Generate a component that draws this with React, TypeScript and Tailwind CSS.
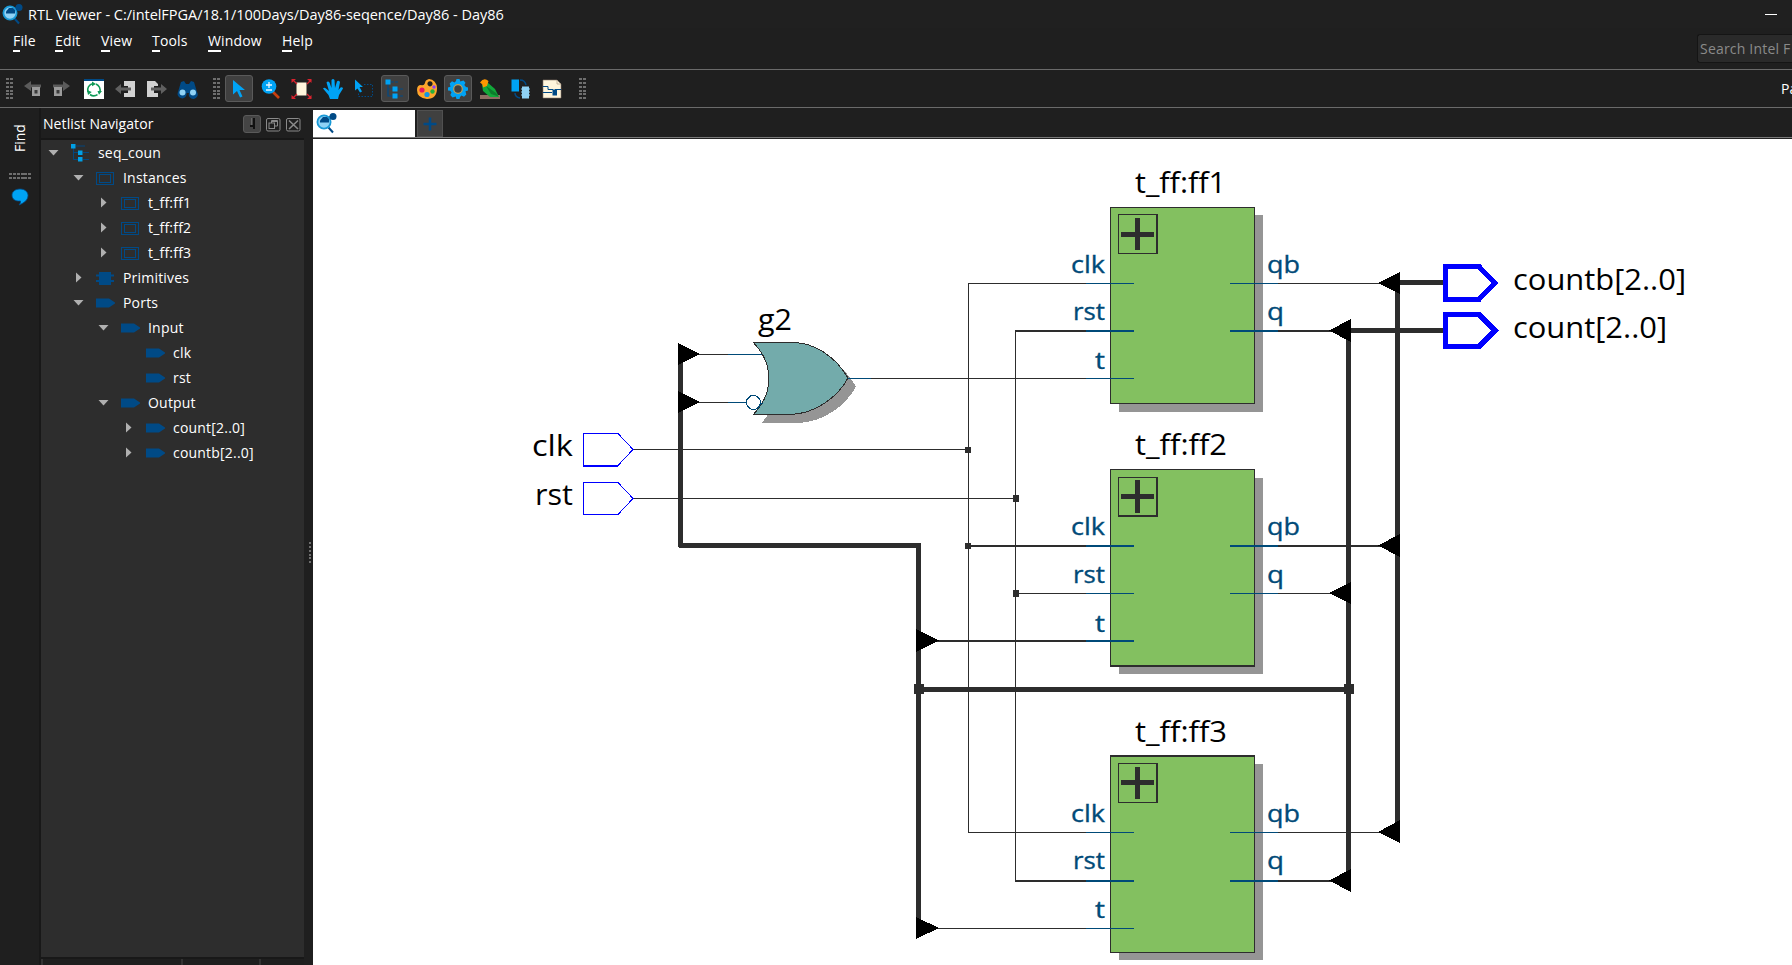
import React from "react";

const BLUE = "#004a86";
const CYAN = "#00a3f5";
const WIRE = "#2d2d2d";
const PIN = "#004a78";

function ViewerIcon() {
  return (
    <svg width="21" height="21" viewBox="0 0 21 21" className="block shrink-0">
      <path d="M12.5 14.5 L17 19.5" stroke={BLUE} strokeWidth="2" />
      <path d="M10 5 L16 3" stroke={BLUE} strokeWidth="1" />
      <circle cx="8" cy="9" r="6.600" fill="#8fd2f5" stroke="#1899d6" strokeWidth="1.800" />
      <path d="M4 9.500V7.500L7 4h4l2 2v3.500Z" fill={BLUE} />
      <circle cx="17" cy="3.500" r="3.500" fill={BLUE} />
    </svg>
  );
}

function Grip() {
  return (
    <svg width="7" height="22" viewBox="0 0 7 22" className="block shrink-0" shapeRendering="crispEdges">
      {[0, 4, 8, 12, 15, 19].map((y) => (
        <g key={y} fill="#6e6e6e">
          <rect x="0" y={y} width="3" height="2" />
          <rect x="4" y={y} width="3" height="2" />
        </g>
      ))}
    </svg>
  );
}

function Icon({ children }: { children: React.ReactNode }) {
  return (
    <svg width="22" height="22" viewBox="0 0 22 22" className="block shrink-0">
      {children}
    </svg>
  );
}

function Tool({ wide = false, active = false, children }: { wide?: boolean; active?: boolean; children: React.ReactNode }) {
  return (
    <div className={`flex h-full shrink-0 items-center justify-center ${wide ? "w-8" : "w-[31px]"}`}>
      <div
        className={`flex h-[27px] w-7 items-center justify-center rounded-[3px] border ${
          active ? "border-[#5a5a5a] bg-[#404040]" : "border-transparent"
        }`}
      >
        <Icon>{children}</Icon>
      </div>
    </div>
  );
}

const HierarchyShapes = () => (
  <>
    <path d="M4 5 V18 H9 M4 11 H9" stroke={BLUE} strokeWidth="1.200" fill="none" />
    <path d="M7 4 H15 M12 11 H19 M12 18 H19" stroke={BLUE} strokeWidth="1.200" strokeDasharray="3 1" fill="none" />
    <rect x="1.500" y="1.500" width="5" height="5" fill={CYAN} />
    <rect x="8.500" y="8.500" width="5" height="5" fill={CYAN} />
    <rect x="8.500" y="15.500" width="5" height="5" fill={CYAN} />
  </>
);

function Toolbar() {
  return (
    <div className="flex h-[39px] items-center border-y border-[#6a6a6a] bg-[#1f1f1f]">
      <div className="flex w-[19px] shrink-0 pl-1.5">
        <Grip />
      </div>
      <div className="flex h-full w-7 shrink-0 items-center justify-center">
        <Icon>
          <path d="M2 8 L9 3 V6.500 H19 V9.500 H9 V13Z" fill="#5b5b5b" />
          <rect x="10" y="9" width="8" height="9" fill="#9b9b9b" />
          <rect x="12.500" y="12" width="3" height="3.500" fill="#3a3a3a" />
        </Icon>
      </div>
      <div className="flex h-full w-7 shrink-0 items-center justify-center">
        <Icon>
          <path d="M20 8 L13 3 V6.500 H3 V9.500 H13 V13Z" fill="#5b5b5b" />
          <rect x="4" y="9" width="8" height="9" fill="#9b9b9b" />
          <rect x="6.500" y="12" width="3" height="3.500" fill="#3a3a3a" />
        </Icon>
      </div>
      <div className="w-[3px] shrink-0" />
      <Tool wide>
        <rect x="1" y="1" width="20" height="20" fill="#fff" />
        <rect x="1" y="1" width="20" height="2" fill={BLUE} />
        <path d="M5 14 A6.500 6.500 0 0 1 10 5.500 M13 6 A6.500 6.500 0 0 1 16.800 14 M14.500 16.700 A6.500 6.500 0 0 1 7 16.500" fill="none" stroke="#0f9a57" strokeWidth="1.600" />
        <path d="M9 3.500 l4 2.500 -4 2.300Z M14.500 13 h4.500 l-3 3.800Z M4 12 l1 5 3.800 -3Z" fill="#0f9a57" />
      </Tool>
      <Tool>
        <path d="M9 3 H20 V19 H9 V15 H13 V8 H9Z" fill="#d2d2d2" />
        <path d="M0 11 L6 6 V9.500 H16 V12.500 H6 V16Z" fill="#606060" />
      </Tool>
      <Tool>
        <path d="M1 3 H9 L12 6 V8 H8 V15 H12 V19 H1Z" fill="#d2d2d2" />
        <path d="M21 11 L15 6 V9.500 H5 V12.500 H15 V16Z" fill="#606060" />
      </Tool>
      <Tool wide>
        <path d="M4 4 L7 3 L9 6 H12 L14 3 L17 4 L20 14 A4.500 4.500 0 1 1 12 15 H9.500 A4.500 4.500 0 1 1 1 14Z" fill={BLUE} />
        <circle cx="5.500" cy="14.500" r="3" fill="#8fd2f5" />
        <circle cx="16" cy="14.500" r="3" fill="#8fd2f5" />
      </Tool>
      <div className="flex w-[19px] shrink-0 pl-[9px]">
        <Grip />
      </div>
      <Tool wide active>
        <path d="M5 2 L17 12 H11.500 L14.500 18.500 L12 19.500 L9 13 L5 16.500Z" fill={CYAN} />
      </Tool>
      <Tool>
        <path d="M13 14 L19 20" stroke="#c6400f" strokeWidth="2.600" />
        <circle cx="9" cy="8.500" r="7.300" fill={CYAN} />
        <path d="M9 4 V10 M6 7 H12 M6 12 H12" stroke="#e8f6ff" strokeWidth="1.300" />
      </Tool>
      <Tool>
        <rect x="5.500" y="4.500" width="10" height="13" fill="#fff5dc" />
        <path d="M2 2 L6 6 M20 2 L16 6 M2 20 L6 16 M20 20 L16 16" stroke="#d9232e" strokeWidth="1.200" />
        <path d="M0.500 1 H5 L0.500 5Z M20.500 1 H16 L20.500 5Z M0.500 21 H5 L0.500 17Z M20.500 21 H16 L20.500 17Z" fill="#d9232e" />
      </Tool>
      <Tool>
        <path d="M8 21 L6.500 17 L1 10.500 Q2 9 4 10.500 L7 13 L4.500 4.500 Q6 2.500 7.500 4.500 L9.500 10 L9.500 2 Q11 0 12.500 2 L13 10 L15 3.500 Q16.500 2 18 4 L16.500 12 L18.500 9.500 Q20.500 8.500 21 10.500 L17 17 L16 21Z" fill={CYAN} />
      </Tool>
      <Tool>
        <path d="M2 1.500 L10 9 H6.500 L9 13.500 L7 14.500 L4.500 10.500 L2 12.500Z" fill={CYAN} />
        <path d="M11 6.500 H19.500 V18.500 H5.500 V14" fill="none" stroke={BLUE} strokeWidth="1" strokeDasharray="1.500 1.500" />
      </Tool>
      <Tool wide active>
        <HierarchyShapes />
      </Tool>
      <Tool>
        <path fillRule="evenodd" d="M13 1 A8 9 0 0 1 21 10 Q21 21 11 21 Q1 20 1 12 Q1 7 5 7 Q8 8 9 5 Q9 2 13 1Z M14 3.200 a2.600 2.600 0 1 0 0.010 0Z" fill="#ffa62b" />
        <circle cx="6" cy="12" r="2.600" fill="#e8175d" />
        <circle cx="11" cy="16.500" r="2.600" fill="#1296e8" />
        <circle cx="16.500" cy="13.500" r="2.200" fill="#28b23c" />
        <circle cx="18" cy="9" r="1.700" fill="#8a3ffc" />
      </Tool>
      <Tool wide active>
        <path d="M9.500 1 H12.500 L13.300 3.500 L16.500 2.500 L18.500 4.800 L17.300 7 L19 9 L21 9.500 V12.500 L18.500 13.300 L19.300 16.500 L17 18.700 L14.500 17.500 L13 19 L12.500 21 H9.500 L8.700 18.500 L5.500 19.500 L3.300 17 L4.500 14.500 L3.300 12.800 L1 12.500 V9.500 L3.500 8.700 L2.700 5.500 L5 3.300 L7.500 4.500 L9 3Z" fill={CYAN} />
        <circle cx="11" cy="11" r="4.300" fill="#404040" stroke="#b9a05a" strokeWidth="1.200" />
      </Tool>
      <Tool>
        <rect x="1" y="17" width="20" height="4" fill="#8c6e63" />
        <path d="M3 7 L8 4 L16 11 L20 19 H11 L4 13Z" fill="#12a83a" />
        <path d="M7 8 L17 15 L19.500 18.500 L12 16Z" fill="#0c7d2c" />
        <path d="M1 4.500 Q5 -1 9.500 3 L8 8 L4 9.500 Q4 6 1 4.500Z" fill="#ff9800" />
      </Tool>
      <Tool>
        <rect x="1.500" y="1.500" width="7.500" height="12" fill={CYAN} />
        <rect x="12" y="8.500" width="7" height="12" fill="#8fd2f5" />
        <path d="M10 2 Q15 2 16 7 M5 15 Q5 19 10 20" fill="none" stroke={BLUE} strokeWidth="1.500" />
        <path d="M11 11 h2 M11 14 h2 M11 17 h2 M18 11 h2 M18 14 h2 M18 17 h2" stroke="#8fd2f5" strokeWidth="1" />
      </Tool>
      <Tool>
        <path d="M2 2 H16 L20 6 V20 H2Z" fill="#fff5dc" stroke="#8c7a6b" strokeWidth="0.600" />
        <path d="M16 2 V6 H20" fill="none" stroke="#b8a58d" strokeWidth="0.800" />
        <path d="M2 8.500 H7 V11.500 H12 M14 11.500 H20 M2 14.500 H11" stroke={BLUE} strokeWidth="1" fill="none" />
        <rect x="11.500" y="11.500" width="4.500" height="6" fill={BLUE} />
      </Tool>
      <div className="flex shrink-0 pl-3">
        <Grip />
      </div>
      <div className="ml-auto w-[11px] shrink-0 overflow-hidden text-[14px] whitespace-nowrap text-white">Pa</div>
    </div>
  );
}

function MenuItem({ label, className }: { label: string; className: string }) {
  return (
    <div className={`shrink-0 whitespace-nowrap ${className}`}>
      <span className="border-b-2 border-white pb-0">{label[0]}</span>
      {label.slice(1)}
    </div>
  );
}

type IconKind = "tree" | "inst" | "prim" | "port";

function NodeIcon({ kind }: { kind: IconKind }) {
  return (
    <svg width="20" height="20" viewBox="0 0 20 20" className="block shrink-0">
      {kind === "tree" && (
        <>
          <path d="M2.500 4 V16.500 H7 M2.500 9.500 H7 M5 3 H14 M12 9.500 H18 M12 16.500 H18" stroke={BLUE} strokeWidth="0.900" fill="none" />
          <rect x="0" y="1" width="4.500" height="4.500" fill="#00a0e6" />
          <rect x="7" y="7.500" width="4.500" height="4.500" fill="#00a0e6" />
          <rect x="7" y="14" width="4.500" height="4.500" fill="#00a0e6" />
        </>
      )}
      {kind === "inst" && (
        <g fill="none" stroke={BLUE} shapeRendering="crispEdges">
          <rect x="0.500" y="4.500" width="17" height="12" />
          <rect x="3.500" y="6.500" width="11" height="8" />
        </g>
      )}
      {kind === "prim" && (
        <path d="M3 4 H15 V6.500 H18 V8.500 H15 V12 H18 V14 H15 V17 H3 V14 H0 V12 H3 V8.500 H0 V6.500 H3Z" fill={BLUE} />
      )}
      {kind === "port" && <path d="M0 5.500 H13 L19 9.500 V10.500 L13 14.500 H0Z" fill={BLUE} />}
    </svg>
  );
}

const indent = ["pl-[7px]", "pl-8", "pl-[57px]", "pl-[82px]"];

const nodes: { d: number; open?: boolean; leaf?: boolean; icon: IconKind; text: string }[] = [
  { d: 0, open: true, icon: "tree", text: "seq_coun" },
  { d: 1, open: true, icon: "inst", text: "Instances" },
  { d: 2, icon: "inst", text: "t_ff:ff1" },
  { d: 2, icon: "inst", text: "t_ff:ff2" },
  { d: 2, icon: "inst", text: "t_ff:ff3" },
  { d: 1, icon: "prim", text: "Primitives" },
  { d: 1, open: true, icon: "port", text: "Ports" },
  { d: 2, open: true, icon: "port", text: "Input" },
  { d: 3, leaf: true, icon: "port", text: "clk" },
  { d: 3, leaf: true, icon: "port", text: "rst" },
  { d: 2, open: true, icon: "port", text: "Output" },
  { d: 3, icon: "port", text: "count[2..0]" },
  { d: 3, icon: "port", text: "countb[2..0]" },
];

function Navigator() {
  return (
    <div className="flex w-[263px] shrink-0 flex-col">
      <div className="flex h-8 shrink-0 items-center border-b-2 border-[#171717] pt-0.5 pl-0.5">
        <span className="-mt-px text-[14px] tracking-[0.08px] text-white">Netlist Navigator</span>
        <div className="ml-auto flex items-center gap-[5px] pr-[3px]">
          <div className="flex h-[18px] w-[18px] items-center justify-center rounded-[3px] border border-[#5a5a5a] bg-[#444]">
            <svg width="8" height="14" viewBox="0 0 8 14">
              <path d="M6 1 V12 M2 9 H6" stroke="#111" strokeWidth="2" />
              <path d="M3.500 1 V8" stroke="#666" strokeWidth="1" />
            </svg>
          </div>
          <svg width="15" height="15" viewBox="0 0 15 15" fill="none" stroke="#8a8a8a">
            <rect x="0.500" y="1.500" width="13.500" height="12.500" rx="1.500" />
            <rect x="3" y="6" width="5.500" height="5.500" />
            <path d="M5.500 6 V3.500 H11.500 V9 H8.500 M5.500 4.500 H11.500" />
          </svg>
          <svg width="15" height="15" viewBox="0 0 15 15" fill="none" stroke="#8a8a8a">
            <rect x="0.500" y="1.500" width="13.500" height="12.500" rx="1.500" />
            <path d="M3 3.500 L12 12 M12 3.500 L3 12" strokeWidth="1.600" />
          </svg>
        </div>
      </div>
      <div className="h-[817px] shrink-0 bg-[#2d2d2d]">
        {nodes.map((n) => (
          <div key={n.text} className={`flex h-[25px] items-center ${indent[n.d]}`}>
            <svg width="11" height="11" viewBox="0 0 11 11" className="mr-3 block shrink-0">
              {!n.leaf &&
                (n.open ? (
                  <path d="M0.500 3 H10.500 L5.500 8.500Z" fill="#b0b0b0" />
                ) : (
                  <path d="M3 0.500 V10.500 L8.500 5.500Z" fill="#b0b0b0" />
                ))}
            </svg>
            <NodeIcon kind={n.icon} />
            <span className="ml-[7px] text-[14px] tracking-[0.2px] text-white">{n.text}</span>
          </div>
        ))}
      </div>
      <div className="flex min-h-0 flex-1 border-t-2 border-[#181818] bg-[#1e1e1e]">
        <div className="w-[142px] border-x-2 border-[#333]" />
        <div className="w-[78px] border-r-2 border-[#333]" />
      </div>
    </div>
  );
}

function Txt({ x, y, w, size, color = "#000", children }: { x: number; y: number; w: number; size: number; color?: string; children: string }) {
  return (
    <text x={x} y={y} fontSize={size} fill={color} textLength={w} lengthAdjust="spacingAndGlyphs">
      {children}
    </text>
  );
}

function H({ y, x1, x2, h = 1, c = WIRE }: { y: number; x1: number; x2: number; h?: number; c?: string }) {
  return <rect x={x1} y={y} width={x2 - x1} height={h} fill={c} />;
}
function V({ x, y1, y2, w = 1 }: { x: number; y1: number; y2: number; w?: number }) {
  return <rect x={x} y={y1} width={w} height={y2 - y1} fill={WIRE} />;
}

const GATE = "M753.500 342.500 H794 C815 343 836 357 848 378 C838 397 815 414 790 414.500 H753.500 C774 393 774 364 753.500 342.500Z";

type Flop = {
  name: string;
  w: number;
  y0: number;
  y1: number;
  top: number;
  bottom: number;
  base: number;
  boxY: number;
  boxB: number;
  plus: [number, number, number];
  shadow: [number, number];
  pins: [number, number][];
  labels: number[];
};

const flops: Flop[] = [
  { name: "t_ff:ff1", w: 90, y0: 207, y1: 404, top: 1, bottom: 1, base: 193, boxY: 214, boxB: 1, plus: [232, 218, 250], shadow: [215, 412], pins: [[283, 1], [330, 2], [378, 1]], labels: [273, 320, 369] },
  { name: "t_ff:ff2", w: 91, y0: 469, y1: 667, top: 1, bottom: 2, base: 455, boxY: 477, boxB: 2, plus: [494, 480, 513], shadow: [478, 674], pins: [[545, 2], [593, 1], [640, 2]], labels: [535, 583, 632] },
  { name: "t_ff:ff3", w: 91, y0: 755, y1: 953, top: 2, bottom: 1, base: 742, boxY: 763, boxB: 1, plus: [780, 767, 799], shadow: [764, 960], pins: [[832, 1], [880, 2], [928, 1]], labels: [822, 869, 918] },
];

function FlipFlop({ f }: { f: Flop }) {
  return (
    <g>
      <rect x="1119" y={f.shadow[0]} width="144" height={f.shadow[1] - f.shadow[0]} fill="#959595" />
      <rect x="1110" y={f.y0} width="145" height={f.y1 - f.y0} fill={WIRE} />
      <rect x="1111" y={f.y0 + f.top} width="143" height={f.y1 - f.y0 - f.top - f.bottom} fill="#83c060" />
      <rect x="1118" y={f.boxY} width="40" height="40" fill={WIRE} />
      <rect x="1119" y={f.boxY + 1} width="37" height={39 - f.boxB} fill="#83c060" />
      <rect x="1121" y={f.plus[0]} width="33" height="5" fill={WIRE} />
      <rect x="1135" y={f.plus[1]} width="5" height={f.plus[2] - f.plus[1]} fill={WIRE} />
      {f.pins.map(([y, h]) => (
        <H key={y} y={y} h={h} x1={1086} x2={1134} c={PIN} />
      ))}
      {f.pins.slice(0, 2).map(([y, h]) => (
        <H key={y} y={y} h={h} x1={1230} x2={1278} c={PIN} />
      ))}
      <Txt x={1135} y={f.base} w={f.w + 1} size={28.5}>{f.name}</Txt>
      <g stroke={PIN} strokeWidth="0.350">
        <Txt x={1071} y={f.labels[0]} w={34} size={24.5} color={PIN}>clk</Txt>
        <Txt x={1073} y={f.labels[1]} w={32} size={24.5} color={PIN}>rst</Txt>
        <Txt x={1095} y={f.labels[2]} w={10} size={24.5} color={PIN}>t</Txt>
        <Txt x={1267} y={f.labels[0]} w={33} size={24.5} color={PIN}>qb</Txt>
        <Txt x={1267} y={f.labels[1]} w={17} size={24.5} color={PIN}>q</Txt>
      </g>
    </g>
  );
}

function Schematic() {
  return (
    <svg
      width="1479"
      height="826"
      viewBox="313 139 1479 826"
      className="block bg-white"
      shapeRendering="crispEdges"
    >
      {/* signal wires */}
      <H y={354} x1={699} x2={728} />
      <H y={354} x1={728} x2={763} c={PIN} />
      <H y={402} x1={699} x2={728} />
      <H y={402} x1={728} x2={747} c={PIN} />
      <H y={378} x1={871} x2={1086} />
      <H y={449} x1={633} x2={968} />
      <H y={498} x1={633} x2={1016} />
      <V x={968} y1={283} y2={833} />
      <V x={1015} y1={330} y2={882} />
      <H y={283} x1={968} x2={1086} />
      <H y={330} h={2} x1={1015} x2={1086} />
      <H y={545} h={2} x1={968} x2={1086} />
      <H y={593} x1={1015} x2={1086} />
      <H y={640} h={2} x1={936} x2={1086} />
      <H y={832} x1={968} x2={1086} />
      <H y={880} h={2} x1={1015} x2={1086} />
      <H y={928} x1={936} x2={1086} />

      {flops.map((f) => (
        <FlipFlop key={f.name} f={f} />
      ))}

      <H y={283} x1={1278} x2={1382} />
      <H y={330} h={2} x1={1278} x2={1333} />
      <H y={545} h={2} x1={1278} x2={1382} />
      <H y={593} x1={1278} x2={1333} />
      <H y={832} x1={1278} x2={1382} />
      <H y={880} h={2} x1={1278} x2={1333} />

      {/* buses */}
      <V x={678} w={5} y1={350} y2={547} />
      <H y={543} h={5} x1={679} x2={921} />
      <V x={916} w={5} y1={543} y2={930} />
      <H y={687} h={5} x1={916} x2={1351} />
      <V x={1346} w={5} y1={330} y2={884} />
      <V x={1395} w={5} y1={283} y2={834} />
      <H y={280} h={5} x1={1398} x2={1445} />
      <H y={328} h={5} x1={1349} x2={1445} />

      {/* junctions */}
      <g fill={WIRE}>
        <rect x="965" y="447" width="6" height="6" />
        <rect x="1013" y="495" width="6" height="7" />
        <rect x="965" y="543" width="6" height="6" />
        <rect x="1013" y="590" width="6" height="7" />
        <rect x="914" y="684" width="10" height="10" />
        <rect x="1344" y="684" width="10" height="10" />
      </g>

      {/* bus rippers */}
      <g fill="#000">
        <path d="M678 343 L700 354 L678 365Z" />
        <path d="M678 391 L700 402 L678 413Z" />
        <path d="M916 629 L939 640.500 L916 652Z" />
        <path d="M916 917 L939 928 L916 939Z" />
        <path d="M1400 272 L1378 283 L1400 294Z" />
        <path d="M1351 319 L1329 330.500 L1351 342Z" />
        <path d="M1400 534 L1378 545.500 L1400 557Z" />
        <path d="M1351 582 L1329 593 L1351 604Z" />
        <path d="M1400 820 L1378 832 L1400 843Z" />
        <path d="M1351 869 L1329 880.500 L1351 892Z" />
      </g>

      {/* inverted-input OR gate */}
      <path d={GATE} fill="#959595" transform="translate(8 8.500)" />
      <path d={GATE} fill="#73abab" stroke={WIRE} strokeWidth="1" />
      <H y={378} x1={848} x2={871} c={PIN} />
      <circle cx="753.500" cy="402.500" r="7" fill="#fff" stroke={PIN} strokeWidth="1.200" />
      <H y={403} x1={760} x2={763} c={PIN} />
      <Txt x={758} y={330} w={34} size={28.5}>g2</Txt>

      {/* input ports */}
      <path d="M583.500 433.500 H618 L633 449.500 L618 465.500 H583.500Z" fill="#fff" stroke="#00f" />
      <H y={465} h={2} x1={583} x2={618} c="#0000ff" />
      <path d="M583.500 482.500 H618 L633 498.500 L618 514.500 H583.500Z" fill="#fff" stroke="#00f" />
      <Txt x={532} y={456} w={41} size={29}>clk</Txt>
      <Txt x={535} y={505} w={38} size={29}>rst</Txt>

      {/* output ports */}
      <g fill="#fff" stroke="#00f" strokeWidth="5">
        <path d="M1445.500 266.500 H1479 L1495 283 L1479 299.500 H1445.500Z" />
        <path d="M1445.500 314.500 H1479 L1495 330.500 L1479 346.500 H1445.500Z" />
      </g>
      <Txt x={1513} y={290} w={173} size={28.5}>countb[2..0]</Txt>
      <Txt x={1513} y={338} w={154} size={28.5}>count[2..0]</Txt>
    </svg>
  );
}

export default function App() {
  return (
    <div className="flex h-[965px] w-[1792px] flex-col overflow-hidden bg-[#1f1f1f] font-['Open_Sans','Noto_Sans',sans-serif] text-white">
      <div className="flex h-7 shrink-0 items-center bg-[#202020] pl-0.5">
        <ViewerIcon />
        <span className="mt-px ml-[5px] text-[14.5px] tracking-[-0.03px] whitespace-nowrap">
          RTL Viewer - C:/intelFPGA/18.1/100Days/Day86-seqence/Day86 - Day86
        </span>
        <div className="mr-[15px] ml-auto h-px w-3 bg-white" />
      </div>
      <div className="flex h-[41px] shrink-0 items-start pl-[13px] text-[14px] leading-[20px]">
        <div className="flex pt-[3px] tracking-[0.15px]">
          <MenuItem label="File" className="w-[42px]" />
          <MenuItem label="Edit" className="w-[46px]" />
          <MenuItem label="View" className="w-[51px]" />
          <MenuItem label="Tools" className="w-14" />
          <MenuItem label="Window" className="w-[74px]" />
          <MenuItem label="Help" className="w-10" />
        </div>
        <div className="mt-1.5 ml-auto flex h-[29px] w-[95px] items-center overflow-hidden rounded-l-[3px] border border-r-0 border-[#151515] bg-[#2a2a2a] pl-0.5 tracking-[0.2px] whitespace-nowrap text-[#8a8a8a]">
          Search Intel F
        </div>
      </div>
      <Toolbar />
      <div className="flex min-h-0 flex-1">
        <div className="flex w-[41px] shrink-0 flex-col items-center border-r-2 border-[#181818]">
          <div className="mt-[13px] flex h-[34px] rotate-180 items-center justify-center text-[14px] [writing-mode:vertical-rl]">Find</div>
          <svg width="22" height="7" viewBox="0 0 22 7" className="mt-[18px] block" shapeRendering="crispEdges">
            {[0, 4, 8, 12, 15, 19].map((x) => (
              <g key={x} fill="#6e6e6e">
                <rect x={x} y="0" width="3" height="2" />
                <rect x={x} y="4" width="3" height="2" />
              </g>
            ))}
          </svg>
          <svg width="18" height="18" viewBox="0 0 18 18" className="mt-2 block">
            <path d="M9 1 C14 1 17 4 17 7.500 C17 12 13 15 8 17 Q10 15 9.500 13 C4 13.500 1 11 1 7 C1 4 4 1 9 1Z" fill={CYAN} stroke={BLUE} strokeWidth="0.800" />
          </svg>
        </div>
        <Navigator />
        <div className="flex w-[9px] shrink-0 items-center justify-end">
          <svg width="4" height="22" viewBox="0 0 4 22" className="mt-8 block" shapeRendering="crispEdges">
            {[0, 4, 8, 12, 15, 19].map((y) => (
              <rect key={y} x="0" y={y} width="2" height="2" fill="#6e6e6e" />
            ))}
          </svg>
        </div>
        <div className="flex min-w-0 flex-1 flex-col">
          <div className="flex h-[31px] shrink-0 flex-col">
            <div className="flex flex-1 items-stretch border-b border-[#7a7a7a] pt-0.5">
              <div className="flex w-[102px] items-center bg-white pl-[3px]">
                <ViewerIcon />
              </div>
              <div className="ml-0.5 flex w-[26px] items-center justify-center border border-[#505050] bg-[#404040]">
                <svg width="14" height="14" viewBox="0 0 14 14">
                  <path d="M7 0.500 V13.500 M0.500 7 H13.500" stroke={BLUE} strokeWidth="2.500" />
                </svg>
              </div>
            </div>
            <div className="h-px bg-[#222]" />
          </div>
          <Schematic />
        </div>
      </div>
    </div>
  );
}
